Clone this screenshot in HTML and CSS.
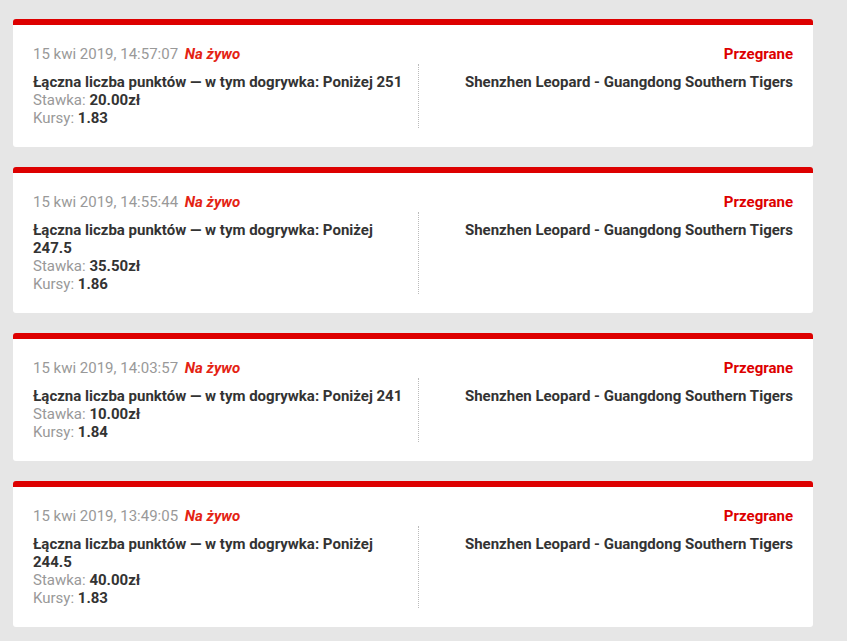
FILE: index.html
```html
<!DOCTYPE html>
<html lang="pl">
<head>
<meta charset="utf-8">
<title>Zakłady</title>
<link rel="stylesheet" href="styles.css">
</head>
<body>
<div class="list">
  <div class="card">
    <div class="head">
      <div class="date">15 kwi 2019, 14:57:07 <span class="live">Na żywo</span></div>
      <div class="status">Przegrane</div>
    </div>
    <div class="body">
      <div class="left">
        <div class="bet">Łączna liczba punktów — w tym dogrywka: Poniżej 251</div>
        <div class="meta">Stawka: <b>20.00zł</b></div>
        <div class="meta">Kursy: <b>1.83</b></div>
      </div>
      <div class="right">Shenzhen Leopard - Guangdong Southern Tigers</div>
    </div>
  </div>
  <div class="card">
    <div class="head">
      <div class="date">15 kwi 2019, 14:55:44 <span class="live">Na żywo</span></div>
      <div class="status">Przegrane</div>
    </div>
    <div class="body">
      <div class="left">
        <div class="bet">Łączna liczba punktów — w tym dogrywka: Poniżej 247.5</div>
        <div class="meta">Stawka: <b>35.50zł</b></div>
        <div class="meta">Kursy: <b>1.86</b></div>
      </div>
      <div class="right">Shenzhen Leopard - Guangdong Southern Tigers</div>
    </div>
  </div>
  <div class="card">
    <div class="head">
      <div class="date">15 kwi 2019, 14:03:57 <span class="live">Na żywo</span></div>
      <div class="status">Przegrane</div>
    </div>
    <div class="body">
      <div class="left">
        <div class="bet">Łączna liczba punktów — w tym dogrywka: Poniżej 241</div>
        <div class="meta">Stawka: <b>10.00zł</b></div>
        <div class="meta">Kursy: <b>1.84</b></div>
      </div>
      <div class="right">Shenzhen Leopard - Guangdong Southern Tigers</div>
    </div>
  </div>
  <div class="card">
    <div class="head">
      <div class="date">15 kwi 2019, 13:49:05 <span class="live">Na żywo</span></div>
      <div class="status">Przegrane</div>
    </div>
    <div class="body">
      <div class="left">
        <div class="bet">Łączna liczba punktów — w tym dogrywka: Poniżej 244.5</div>
        <div class="meta">Stawka: <b>40.00zł</b></div>
        <div class="meta">Kursy: <b>1.83</b></div>
      </div>
      <div class="right">Shenzhen Leopard - Guangdong Southern Tigers</div>
    </div>
  </div>
</div>
</body>
</html>
```
FILE: styles.css
```css
html, body {
  margin: 0;
  padding: 0;
  background: #e6e6e6;
}
body {
  font-family: Roboto, "Liberation Sans", sans-serif;
  font-size: 15px;
  line-height: 18px;
  color: #333;
}
.list {
  width: 800px;
  padding: 19px 0 0 13px;
  display: flex;
  flex-direction: column;
  gap: 20px;
}
.card {
  background: #fff;
  border-top: 6px solid #dd0000;
  border-radius: 3px;
  padding: 20px 20px 19px;
}
.head {
  display: flex;
  justify-content: space-between;
}
.date {
  color: #999;
}
.live {
  color: #e42313;
  font-weight: 700;
  font-style: italic;
  margin-left: 3px;
}
.status {
  color: #dd0000;
  font-weight: 700;
}
.body {
  display: grid;
  grid-template-columns: 385px 1fr;
  margin-top: 1px;
}
.left {
  padding: 9px 10px 1px 0;
}
.bet {
  font-weight: 700;
}
.meta {
  color: #999;
}
.meta b {
  color: #333;
  font-weight: 700;
}
.right {
  border-left: 1px dotted #bbb;
  padding-top: 9px;
  text-align: right;
  font-weight: 700;
}
```
